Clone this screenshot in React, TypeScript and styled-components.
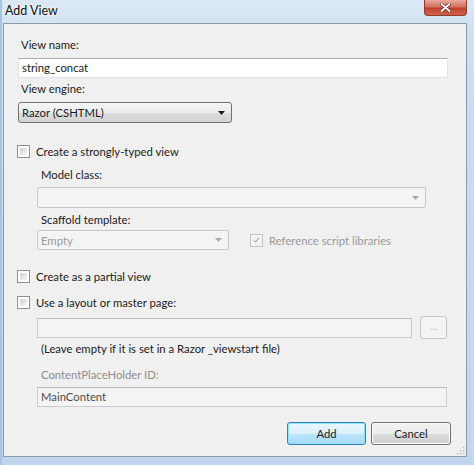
import React from "react";
import styled, { createGlobalStyle } from "styled-components";

const GlobalStyle = createGlobalStyle`
  html, body {
    margin: 0;
    padding: 0;
    overflow: hidden;
  }
  body {
    font-family: Lato, "Open Sans", "Noto Sans", sans-serif;
    font-size: 11.3px;
    color: #1b1b1b;
  }
`;

const Window = styled.div`
  width: 474px;
  height: 465px;
  box-sizing: border-box;
  display: flex;
  flex-direction: column;
  background: linear-gradient(to bottom, #dce8f5 0px, #cddff1 40px, #bfd6ee 100%);
  border-left: 2px solid #a6c4e4;
`;

const TitleBar = styled.div`
  height: 23px;
  display: flex;
  justify-content: space-between;
  align-items: flex-start;
`;

const Title = styled.div`
  padding: 3px 0 0 3px;
  line-height: 16px;
  font-size: 12.5px;
  color: #111;
  text-shadow: 0 0 6px #fff, 0 0 3px #fff;
`;

const CloseButton = styled.div`
  width: 43px;
  height: 16px;
  margin-right: 7px;
  box-sizing: border-box;
  border: 1px solid #8c3b30;
  border-top: none;
  border-radius: 0 0 4px 4px;
  background: linear-gradient(to bottom, #e9a99c 0%, #d5715f 45%, #c0402e 55%, #d2634d 100%);
  display: flex;
  align-items: center;
  justify-content: center;
`;

const Client = styled.div`
  flex: 1;
  margin: 0 7px 8px 1px;
  border: 1px solid #8d9aa8;
  background: #f0f0f0;
  position: relative;
  display: flex;
  flex-direction: column;
  padding: 13px 0 0 14px;
`;

const Label = styled.div<{ $top?: number; $indent?: boolean; $disabled?: boolean }>`
  line-height: 16px;
  height: 16px;
  margin-top: ${(p) => p.$top ?? 0}px;
  padding-left: ${(p) => (p.$indent ? 23 : 3)}px;
  color: ${(p) => (p.$disabled ? "#8e8e8e" : "#1b1b1b")};
  white-space: nowrap;
`;

const TextBox = styled.div<{ $top?: number; $width: number; $indent?: boolean; $disabled?: boolean }>`
  box-sizing: border-box;
  width: ${(p) => p.$width}px;
  height: 20px;
  margin-top: ${(p) => p.$top ?? 0}px;
  margin-left: ${(p) => (p.$indent ? 19 : 0)}px;
  border: 1px solid ${(p) => (p.$disabled ? "#c9cbcd" : "#e2e3ea")};
  border-top-color: ${(p) => (p.$disabled ? "#b9bbbd" : "#abadb3")};
  background: ${(p) => (p.$disabled ? "#f4f4f4" : "#fff")};
  color: ${(p) => (p.$disabled ? "#4d4d4d" : "#1b1b1b")};
  padding-left: 3px;
  line-height: 18px;
  white-space: nowrap;
  flex-shrink: 0;
`;

const Select = styled.div<{ $top?: number; $width: number; $indent?: boolean; $disabled?: boolean; $height?: number }>`
  box-sizing: border-box;
  width: ${(p) => p.$width}px;
  height: ${(p) => p.$height ?? 21}px;
  margin-top: ${(p) => p.$top ?? 0}px;
  margin-left: ${(p) => (p.$indent ? 19 : 0)}px;
  border: 1px solid ${(p) => (p.$disabled ? "#c5c7c9" : "#707070")};
  border-radius: ${(p) => (p.$disabled ? 2 : 3)}px;
  background: ${(p) =>
    p.$disabled
      ? "#f4f4f4"
      : "linear-gradient(to bottom, #f6f6f6 0%, #ececec 50%, #dedede 51%, #d3d3d3 100%)"};
  color: ${(p) => (p.$disabled ? "#9a9a9a" : "#1b1b1b")};
  display: flex;
  align-items: center;
  justify-content: space-between;
  padding: 0 6px 0 3px;
  white-space: nowrap;
  flex-shrink: 0;
`;

const Arrow = ({ color }: { color: string }) => (
  <svg width="7" height="4" viewBox="0 0 7 4">
    <path d="M0 0 H7 L3.5 4 Z" fill={color} />
  </svg>
);

const CheckRow = styled.div<{ $top?: number }>`
  display: flex;
  align-items: center;
  gap: 6px;
  height: 16px;
  margin-top: ${(p) => p.$top ?? 0}px;
  margin-left: -1px;
  white-space: nowrap;
`;

const CheckBox = styled.div<{ $disabled?: boolean }>`
  box-sizing: border-box;
  width: 13px;
  height: 13px;
  border: 1px solid ${(p) => (p.$disabled ? "#c2c2c2" : "#8e8f8f")};
  background: ${(p) => (p.$disabled ? "#f4f4f4" : "#fff")};
  padding: 2px;
  display: flex;
  align-items: center;
  justify-content: center;
  flex-shrink: 0;
`;

const CheckInner = styled.div`
  width: 100%;
  height: 100%;
  background: linear-gradient(135deg, #cbcfd5 0%, #e7e8ea 60%, #f6f6f6 100%);
`;

const DisabledText = styled.span`
  color: #9a9a9a;
`;

const Row = styled.div<{ $top?: number; $gap: number; $indent?: boolean }>`
  display: flex;
  align-items: center;
  gap: ${(p) => p.$gap}px;
  margin-top: ${(p) => p.$top ?? 0}px;
  margin-left: ${(p) => (p.$indent ? 19 : 0)}px;
`;

const BrowseButton = styled.div`
  box-sizing: border-box;
  width: 27px;
  height: 23px;
  border: 1px solid #c3c5c7;
  border-radius: 3px;
  background: #f4f4f4;
  color: #b0b0b0;
  font-size: 9px;
  display: flex;
  align-items: center;
  justify-content: center;
  padding-bottom: 2px;
`;

const ButtonBar = styled.div`
  display: flex;
  justify-content: flex-end;
  gap: 5px;
  margin-top: 15px;
  padding-right: 15px;
`;

const Button = styled.div<{ $default?: boolean }>`
  box-sizing: border-box;
  width: ${(p) => (p.$default ? 79 : 80)}px;
  height: 23px;
  border-radius: 3px;
  border: 1px solid ${(p) => (p.$default ? "#3c7fb1" : "#707070")};
  background: ${(p) =>
    p.$default
      ? "linear-gradient(to bottom, #eaf6fd 0%, #d9f0fc 50%, #bee6fd 51%, #a7d9f5 100%)"
      : "linear-gradient(to bottom, #f2f2f2 0%, #ebebeb 50%, #dddddd 51%, #cfcfcf 100%)"};
  box-shadow: ${(p) => (p.$default ? "inset 0 0 0 1px #8ee3f9" : "inset 0 0 0 1px #fcfcfc")};
  display: flex;
  align-items: center;
  justify-content: center;
  color: #1b1b1b;
`;

const Grip = styled.div`
  position: absolute;
  right: 1px;
  bottom: 1px;
  line-height: 0;
`;

export default function App() {
  return (
    <>
      <GlobalStyle />
      <Window>
        <TitleBar>
          <Title>Add View</Title>
          <CloseButton>
            <svg width="11" height="9" viewBox="0 0 11 9">
              <path d="M1.5 1 L9.5 8 M9.5 1 L1.5 8" stroke="#6b2018" strokeWidth="3.2" strokeLinecap="round" />
              <path d="M1.5 1 L9.5 8 M9.5 1 L1.5 8" stroke="#fff" strokeWidth="1.9" strokeLinecap="round" />
            </svg>
          </CloseButton>
        </TitleBar>
        <Client>
          <Label>View name:</Label>
          <TextBox $top={5} $width={430}>string_concat</TextBox>
          <Label $top={3}>View engine:</Label>
          <Select $top={5} $width={214}>
            Razor (CSHTML)
            <Arrow color="#1b1b1b" />
          </Select>

          <CheckRow $top={20}>
            <CheckBox>
              <CheckInner />
            </CheckBox>
            Create a strongly-typed view
          </CheckRow>
          <Label $top={8} $indent>Model class:</Label>
          <Select $top={4} $width={389} $indent $disabled>
            <span />
            <Arrow color="#a8a8a8" />
          </Select>
          <Label $top={4} $indent>Scaffold template:</Label>
          <Row $top={2} $gap={22} $indent>
            <Select $width={192} $height={20} $disabled>
              Empty
              <Arrow color="#a8a8a8" />
            </Select>
            <CheckRow>
              <CheckBox $disabled>
                <svg width="9" height="8" viewBox="0 0 9 8">
                  <path d="M1 4.2 L3.4 6.6 L8 1" fill="none" stroke="#a6a6a6" strokeWidth="1.4" />
                </svg>
              </CheckBox>
              <DisabledText>Reference script libraries</DisabledText>
            </CheckRow>
          </Row>

          <CheckRow $top={18}>
            <CheckBox>
              <CheckInner />
            </CheckBox>
            Create as a partial view
          </CheckRow>
          <CheckRow $top={10}>
            <CheckBox>
              <CheckInner />
            </CheckBox>
            Use a layout or master page:
          </CheckRow>
          <Row $top={6} $gap={8} $indent>
            <TextBox $width={375} $disabled />
            <BrowseButton>...</BrowseButton>
          </Row>
          <Label $top={2} $indent>(Leave empty if it is set in a Razor _viewstart file)</Label>
          <Label $top={10} $indent $disabled>
            ContentPlaceHolder ID:
          </Label>
          <TextBox $top={4} $width={410} $indent $disabled>
            MainContent
          </TextBox>

          <ButtonBar>
            <Button $default>Add</Button>
            <Button>Cancel</Button>
          </ButtonBar>
          <Grip>
            <svg width="9" height="9" viewBox="0 0 9 9">
              {[
                [7, 1],
                [7, 4],
                [4, 4],
                [7, 7],
                [4, 7],
                [1, 7],
              ].map(([x, y]) => (
                <rect key={`${x}-${y}`} x={x} y={y} width="1.5" height="1.5" fill="#b8bcc2" />
              ))}
            </svg>
          </Grip>
        </Client>
      </Window>
    </>
  );
}
